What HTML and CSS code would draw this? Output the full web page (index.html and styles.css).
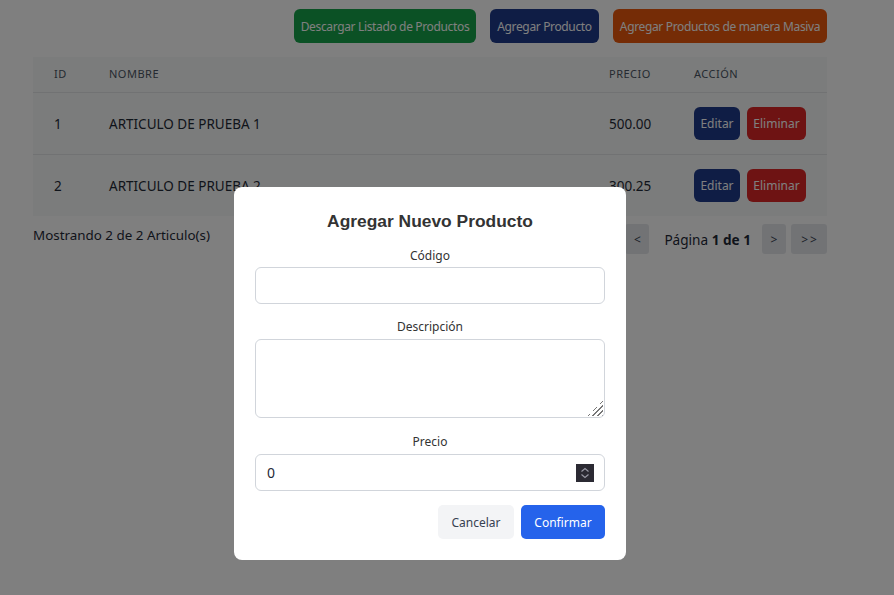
FILE: index.html
```html
<!DOCTYPE html>
<html lang="es">
<head>
<meta charset="utf-8">
<title>Productos</title>
<link rel="stylesheet" href="styles.css">
</head>
<body>
<div class="page">
  <div class="toolbar">
    <button class="btn btn-green">Descargar Listado de Productos</button>
    <button class="btn btn-navy">Agregar Producto</button>
    <button class="btn btn-orange">Agregar Productos de manera Masiva</button>
  </div>
  <table class="table">
    <thead>
      <tr><th class="c-id">ID</th><th class="c-name">Nombre</th><th class="c-price">Precio</th><th class="c-act">Acción</th></tr>
    </thead>
    <tbody>
      <tr><td class="c-id">1</td><td class="c-name">ARTICULO DE PRUEBA 1</td><td class="c-price">500.00</td><td class="c-act"><div class="acts"><button class="sbtn btn-navy">Editar</button><button class="sbtn btn-red">Eliminar</button></div></td></tr>
      <tr><td class="c-id">2</td><td class="c-name">ARTICULO DE PRUEBA 2</td><td class="c-price">300.25</td><td class="c-act"><div class="acts"><button class="sbtn btn-navy">Editar</button><button class="sbtn btn-red">Eliminar</button></div></td></tr>
    </tbody>
  </table>
  <div class="footer">
    <span class="count">Mostrando 2 de 2 Articulo(s)</span>
    <div class="pager">
      <button class="pbtn">&lt;</button>
      <span class="pinfo">Página <b>1 de 1</b></span>
      <button class="pbtn">&gt;</button>
      <button class="pbtn wide">&gt;&gt;</button>
    </div>
  </div>
</div>

<div class="overlay">
  <div class="modal">
    <h2 class="title">Agregar Nuevo Producto</h2>
    <div class="field field-code">
      <label class="label">Código</label>
      <input class="input" type="text">
    </div>
    <div class="field field-desc">
      <label class="label">Descripción</label>
      <textarea class="input textarea"></textarea>
    </div>
    <div class="field">
      <label class="label">Precio</label>
      <div class="input number">
        <span class="numval">0</span>
        <span class="spin">
          <svg width="18" height="18" viewBox="0 0 18 18"><rect width="18" height="18" fill="#2b2a33"/><path d="M5.5 7.5 L9 4.5 L12.5 7.5" fill="none" stroke="#9a9aa6" stroke-width="1.1"/><path d="M5.5 10.5 L9 13.5 L12.5 10.5" fill="none" stroke="#9a9aa6" stroke-width="1.1"/></svg>
        </span>
      </div>
    </div>
    <div class="actions">
      <button class="mbtn cancel">Cancelar</button>
      <button class="mbtn confirm">Confirmar</button>
    </div>
  </div>
</div>
</body>
</html>
```
FILE: styles.css
```css
* { box-sizing: border-box; }
html, body { margin: 0; padding: 0; }
body {
  font-family: "Noto Sans", "Open Sans", sans-serif;
  background: #ffffff;
  color: #374151;
  width: 894px;
  height: 595px;
  overflow: hidden;
  position: relative;
}
.page {
  padding: 9px 0 0 33px;
  width: 827px;
}
.toolbar {
  display: flex;
  justify-content: flex-end;
  gap: 14px;
  margin-bottom: 14px;
}
button { font-family: inherit; cursor: pointer; white-space: nowrap; }
.btn {
  height: 34px;
  border: none;
  border-radius: 6px;
  color: #fff;
  font-size: 12px;
  letter-spacing: -0.35px;
  padding: 0;
}
.btn-green { background: #16a34a; width: 182px; }
.btn-navy { background: #1e3a8a; }
.btn-orange { background: #ea580c; }
.btn-red { background: #dc2626; }
.toolbar .btn-navy { width: 109px; }
.toolbar .btn-orange { width: 214px; }

.table {
  width: 794px;
  border-collapse: collapse;
  background: #f7f9f8;
}
.table th {
  height: 35px;
  font-size: 11px;
  font-weight: 400;
  text-transform: uppercase;
  letter-spacing: 0.5px;
  text-align: left;
  color: #4b5563;
  border-bottom: 1px solid #e2e4e6;
  padding: 0 0 2px;
}
.table td {
  height: 62px;
  font-size: 13.5px;
  color: #1f2937;
  padding: 1px 0 0;
  border-bottom: 1px solid #e2e4e6;
}
.table tbody tr:last-child td { border-bottom: none; }
.c-id { width: 76px; padding-left: 21px !important; }
.c-name { width: 500px; }
.c-price { width: 85px; }
.acts { display: flex; gap: 7px; }
.sbtn {
  height: 33px;
  border: none;
  border-radius: 6px;
  color: #fff;
  font-size: 12px;
  padding: 0;
}
.sbtn.btn-navy { width: 46px; }
.sbtn.btn-red { width: 59px; }

.footer {
  width: 794px;
  display: flex;
  justify-content: space-between;
  align-items: flex-start;
  padding-top: 8px;
}
.count { font-size: 13.4px; color: #1f2937; padding-top: 2px; }
.pager { display: flex; align-items: center; gap: 5px; }
.pbtn {
  width: 24px;
  height: 30px;
  border: none;
  border-radius: 3px;
  background: #e5e7eb;
  color: #374151;
  font-size: 12px;
  padding: 0;
}
.pbtn.wide { width: 36px; letter-spacing: 2px; padding-left: 2px; }
.pinfo { font-size: 13.6px; color: #1f2937; margin: 0 6px 0 10px; }
.pinfo b { font-weight: 700; }

.overlay {
  position: absolute;
  inset: 0;
  background: rgba(0, 0, 0, 0.5);
  display: flex;
  align-items: flex-start;
  justify-content: center;
  padding: 187px 34px 0 0;
}
.modal {
  width: 392px;
  height: 373px;
  background: #fff;
  border-radius: 8px;
  padding: 24px 21px 0 21px;
}
.title {
  margin: 0 0 16px;
  text-align: center;
  font-family: "Liberation Sans", Arial, sans-serif;
  font-size: 17.4px;
  font-weight: 700;
  color: #333;
}
.field { display: flex; flex-direction: column; margin-bottom: 15px; }
.field-desc { margin-bottom: 16px; }
.label {
  text-align: center;
  font-size: 12px;
  line-height: 16px;
  color: #333;
  margin-bottom: 4px;
}
.field-code .label { margin-bottom: 3px; }
.input {
  width: 350px;
  height: 37px;
  border: 1px solid #d1d5db;
  border-radius: 6px;
  background: #fff;
  font-family: inherit;
  font-size: 14px;
  margin: 0;
}
.textarea {
  height: 79px;
  resize: none;
  background-color: #fff;
  background-image:
    linear-gradient(to bottom right, #fff 50%, transparent 50%),
    repeating-linear-gradient(135deg, transparent 0 2.4px, #777 2.4px 3.6px);
  background-size: 15px 15px, 15px 15px;
  background-position: right 1px bottom 1px, right 1px bottom 1px;
  background-repeat: no-repeat;
}
.number {
  display: flex;
  align-items: center;
  justify-content: space-between;
  padding: 0 10px 0 11px;
}
.numval { font-size: 14px; color: #1f2937; }
.spin { display: flex; }
.actions { display: flex; justify-content: flex-end; gap: 7px; margin-top: -1px; }
.mbtn {
  height: 34px;
  border: none;
  border-radius: 5px;
  font-size: 12px;
  padding: 0;
}
.cancel { width: 76px; background: #f3f4f6; color: #374151; }
.confirm { width: 84px; background: #2563eb; color: #fff; }
```
